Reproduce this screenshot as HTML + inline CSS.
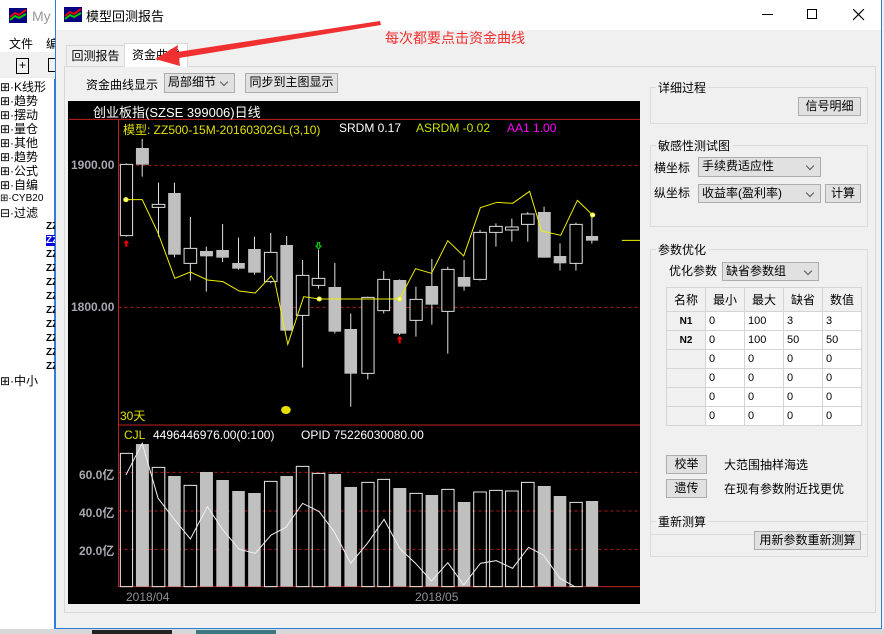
<!DOCTYPE html>
<html><head><meta charset="utf-8"><style>
*{margin:0;padding:0;box-sizing:border-box}
body{width:884px;height:634px;overflow:hidden;background:#f0f0f0;position:relative;font-family:"Liberation Sans","Noto Sans CJK SC",sans-serif;font-size:12px;color:#000}
.a{position:absolute;white-space:nowrap}
.btn{position:absolute;background:#e1e1e1;border:1px solid #adadad;text-align:center;font-size:12px;line-height:17px}
.cb{position:absolute;background:#e1e1e1;border:1px solid #adadad;font-size:12px;line-height:17px;padding-left:3px}
.cb:after{content:"";position:absolute;right:7px;top:5px;width:5px;height:5px;border-right:1px solid #555;border-bottom:1px solid #555;transform:rotate(45deg)}
.gb{position:absolute;border:1px solid #dcdcdc}
.gl{position:absolute;background:#f0f0f0;padding:0 2px;font-size:12px;line-height:14px}
.ct{position:absolute;font-size:12px;line-height:14px;white-space:nowrap}
table{border-collapse:collapse;position:absolute;left:666px;top:287px}
td{border:1px solid #d4d4d4;width:39px;height:19px;font-size:11px;padding-left:3px;background:#fff}
td.h{background:#f0f0f0;text-align:center;padding:0;font-size:12px}
.zz{padding-left:46px;font-size:10px;font-weight:bold;height:14px}
</style></head><body>
<div class="a" style="left:0;top:0;width:56px;height:634px;background:#fff"></div>
<svg class="a" style="left:9px;top:8px" width="18" height="15"><rect width="18" height="15" fill="#000080"/><path d="M1 9 L6 5 L10 7 L17 2" stroke="#e00" stroke-width="2" fill="none"/><path d="M1 12 L6 8 L10 10 L17 6" stroke="#0c0" stroke-width="2" fill="none"/></svg>
<div class="a" style="left:32px;top:8px;font-size:14px;color:#999">My</div>
<div class="a" style="left:0;top:31px;width:56px;height:20px;background:#fff"></div>
<div class="a" style="left:9px;top:35px;font-size:12px">文件</div>
<div class="a" style="left:46px;top:35px;font-size:12px">编</div>
<div class="a" style="left:0;top:52px;width:56px;height:26px;background:#f0f0f0"></div>
<div class="a" style="left:16px;top:58px;width:13px;height:16px;border:1px solid #000;font-size:12px;line-height:13px;text-align:center">+</div>
<div class="a" style="left:48px;top:58px;width:10px;height:14px;border:1px solid #000"></div>
<div class="a" style="left:0;top:79px;width:55px;height:551px;background:#fff;border-right:1px solid #3080e0"></div>
<div class="a" style="left:0;top:80px;font-size:12px;line-height:14px">
<div>⊞·K线形</div><div>⊞·趋势</div><div>⊞·摆动</div><div>⊞·量仓</div><div>⊞·其他</div><div>⊞·趋势</div><div>⊞·公式</div><div>⊞·自编</div><div style="font-size:10px">⊞·CYB20</div><div>⊟·过滤</div>
<div class="zz">ZZ</div><div class="zz"><span style="background:#0000e0;color:#fff">ZZ</span></div>
<div class="zz">ZZ</div><div class="zz">ZZ</div><div class="zz">ZZ</div><div class="zz">ZZ</div><div class="zz">ZZ</div><div class="zz">ZZ</div><div class="zz">ZZ</div><div class="zz">ZZ</div><div class="zz">ZZ</div>
<div>⊞·中小</div></div>
<div class="a" style="left:0;top:629px;width:884px;height:5px;background:#d8d8d8"></div>
<div class="a" style="left:92px;top:630px;width:80px;height:4px;background:#222"></div>
<div class="a" style="left:196px;top:630px;width:80px;height:4px;background:#3a7a80"></div>

<div class="a" style="left:55px;top:0;width:827px;height:629px;background:#f0f0f0;border:1px solid #2a7fd4;border-top:none"></div>
<div class="a" style="left:56px;top:0;width:825px;height:30px;background:#fff"></div>
<svg class="a" style="left:64px;top:7px" width="18" height="15"><rect width="18" height="15" fill="#000080"/><path d="M1 9 L6 5 L10 7 L17 2" stroke="#e00" stroke-width="2" fill="none"/><path d="M1 12 L6 8 L10 10 L17 6" stroke="#0c0" stroke-width="2" fill="none"/></svg>
<div class="a" style="left:86px;top:6px;font-size:13px">模型回测报告</div>
<div class="a" style="left:762px;top:14px;width:11px;height:1px;background:#000"></div>
<div class="a" style="left:807px;top:9px;width:10px;height:10px;border:1px solid #000"></div>
<svg class="a" style="left:853px;top:9px" width="12" height="12"><path d="M0 0L11 11M11 0L0 11" stroke="#000" stroke-width="1.2"/></svg>

<div class="a" style="left:64px;top:66px;width:812px;height:547px;border:1px solid #d9d9d9;background:#f0f0f0"></div>
<div class="a" style="left:66px;top:45px;width:59px;height:21px;border:1px solid #d9d9d9;border-bottom:none;background:#f0f0f0;font-size:12px;line-height:20px;text-align:center">回测报告</div>
<div class="a" style="left:124px;top:43px;width:64px;height:24px;border:1px solid #d9d9d9;border-bottom:none;background:#fff;font-size:12px;line-height:22px;text-align:center">资金曲线</div>

<div class="a" style="left:86px;top:76px;font-size:12px">资金曲线显示</div>
<div class="cb" style="left:164px;top:73px;width:71px;height:20px">局部细节</div>
<div class="btn" style="left:245px;top:73px;width:93px;height:20px">同步到主图显示</div>

<div class="a" style="left:68px;top:101px;width:572px;height:503px;background:#000"></div>
<svg class="a" style="left:60px;top:100px" width="580" height="534" viewBox="0 0 1566 1602" preserveAspectRatio="none">
<g fill="none">
<path d="M24 58H1566M158 58V1461M158 975H1566M158 1460H1566" stroke="#c02020" stroke-width="1" vector-effect="non-scaling-stroke"/>
<path d="M158 196H1566M158 622H1566M158 1117H1566M158 1233H1566M158 1348H1566" stroke="#b01818" stroke-width="1" stroke-dasharray="3 3" vector-effect="non-scaling-stroke"/>
</g>
<g stroke="#e0e0e0" stroke-width="1">
<path vector-effect="non-scaling-stroke" d="M179 190V410M222 117V230M266 248V410M309 248V472M352 351V542M395 440V575M439 372V486M482 413V509M525 410V524M569 399V550M612 408V692M655 480V803M698 450V566M742 489V700M785 641V920M831 590V838M874 513V640M917 538V705M961 560V710M1004 477V674M1047 500V761M1091 480V572M1134 390V542M1177 370V440M1220 356V425M1263 336V425M1307 320V473M1350 430V512M1393 368V512M1436 345V431"/>
</g>
<g stroke="#e0e0e0" fill="#000">
<rect x="163" y="193" width="33" height="214" vector-effect="non-scaling-stroke"/>
<rect x="249" y="313" width="34" height="9" vector-effect="non-scaling-stroke"/>
<rect x="335" y="445" width="34" height="45" vector-effect="non-scaling-stroke"/>
<rect x="552" y="457" width="34" height="88" vector-effect="non-scaling-stroke"/>
<rect x="638" y="526" width="34" height="120" vector-effect="non-scaling-stroke"/>
<rect x="681" y="535" width="34" height="21" vector-effect="non-scaling-stroke"/>
<rect x="815" y="592" width="33" height="228" vector-effect="non-scaling-stroke"/>
<rect x="858" y="538" width="32" height="94" vector-effect="non-scaling-stroke"/>
<rect x="945" y="598" width="33" height="63" vector-effect="non-scaling-stroke"/>
<rect x="1031" y="508" width="33" height="126" vector-effect="non-scaling-stroke"/>
<rect x="1117" y="397" width="34" height="141" vector-effect="non-scaling-stroke"/>
<rect x="1160" y="379" width="34" height="18" vector-effect="non-scaling-stroke"/>
<rect x="1203" y="381" width="34" height="9" vector-effect="non-scaling-stroke"/>
<rect x="1246" y="342" width="34" height="31" vector-effect="non-scaling-stroke"/>
<rect x="1377" y="373" width="33" height="117" vector-effect="non-scaling-stroke"/>
</g>
<g fill="#c0c0c0">
<rect x="205" y="144" width="35" height="50"/><rect x="292" y="279" width="34" height="185"/><rect x="378" y="453" width="35" height="16"/><rect x="422" y="450" width="34" height="23"/><rect x="465" y="489" width="34" height="17"/><rect x="508" y="447" width="34" height="71"/><rect x="595" y="435" width="34" height="257"/><rect x="725" y="561" width="34" height="134"/><rect x="768" y="687" width="34" height="134"/><rect x="900" y="540" width="35" height="161"/><rect x="987" y="558" width="34" height="56"/><rect x="1074" y="531" width="34" height="29"/><rect x="1290" y="336" width="35" height="137"/><rect x="1333" y="468" width="34" height="22"/><rect x="1420" y="408" width="33" height="14"/>
</g>
<polyline vector-effect="non-scaling-stroke" fill="none" stroke="#f0f000" stroke-width="1" points="178,299 222,299 265,400 310,535 352,516 398,540 440,545 484,573 527,579 570,528 580,545 615,733 658,590 700,597 917,597 960,506 1003,520 1047,422 1090,468 1135,323 1180,307 1222,310 1268,274 1300,393 1352,406 1397,301 1438,345"/>
<path vector-effect="non-scaling-stroke" d="M1517 421H1566" stroke="#f0f000"/>
<g fill="#ffffc0" stroke="#f0f000"><ellipse vector-effect="non-scaling-stroke" cx="178" cy="299" rx="6" ry="6"/><ellipse vector-effect="non-scaling-stroke" cx="700" cy="597" rx="6" ry="6"/><ellipse vector-effect="non-scaling-stroke" cx="917" cy="597" rx="6" ry="6"/><ellipse vector-effect="non-scaling-stroke" cx="1438" cy="345" rx="6" ry="6"/></g>
<ellipse cx="610" cy="930" rx="13" ry="12" fill="#e8e000"/>
<path d="M179 420L171 430H176V440H182V430H187Z M917 708L909 718H914V730H920V718H925Z" fill="#f00000"/>
<path vector-effect="non-scaling-stroke" d="M695 428V438H691L698 447L705 438H701V428Z" fill="none" stroke="#00e000"/>
<g fill="#c0c0c0">
<rect x="205" y="1032" width="35" height="428"/><rect x="292" y="1128" width="34" height="332"/><rect x="378" y="1116" width="35" height="344"/><rect x="422" y="1140" width="34" height="320"/><rect x="465" y="1173" width="34" height="287"/><rect x="508" y="1179" width="34" height="281"/><rect x="595" y="1128" width="34" height="332"/><rect x="725" y="1122" width="34" height="338"/><rect x="768" y="1161" width="34" height="299"/><rect x="900" y="1164" width="35" height="296"/><rect x="987" y="1185" width="34" height="275"/><rect x="1074" y="1206" width="34" height="254"/><rect x="1290" y="1158" width="35" height="302"/><rect x="1333" y="1188" width="34" height="272"/><rect x="1420" y="1203" width="33" height="257"/>
</g>
<g fill="none" stroke="#e8e8e8">
<rect vector-effect="non-scaling-stroke" x="163" y="1060" width="33" height="400"/><rect vector-effect="non-scaling-stroke" x="249" y="1102" width="34" height="358"/><rect vector-effect="non-scaling-stroke" x="335" y="1156" width="34" height="304"/><rect vector-effect="non-scaling-stroke" x="552" y="1144" width="34" height="316"/><rect vector-effect="non-scaling-stroke" x="638" y="1099" width="34" height="361"/><rect vector-effect="non-scaling-stroke" x="681" y="1120" width="34" height="340"/><rect vector-effect="non-scaling-stroke" x="815" y="1147" width="33" height="313"/><rect vector-effect="non-scaling-stroke" x="858" y="1138" width="32" height="322"/><rect vector-effect="non-scaling-stroke" x="945" y="1180" width="33" height="280"/><rect vector-effect="non-scaling-stroke" x="1031" y="1168" width="33" height="292"/><rect vector-effect="non-scaling-stroke" x="1117" y="1176" width="34" height="284"/><rect vector-effect="non-scaling-stroke" x="1160" y="1171" width="34" height="289"/><rect vector-effect="non-scaling-stroke" x="1203" y="1173" width="34" height="287"/><rect vector-effect="non-scaling-stroke" x="1246" y="1147" width="34" height="313"/><rect vector-effect="non-scaling-stroke" x="1377" y="1207" width="33" height="253"/>
</g>
<polyline vector-effect="non-scaling-stroke" fill="none" stroke="#f0f0f0" points="178,1125 222,1030 265,1195 310,1260 352,1317 398,1220 440,1290 484,1348 527,1360 570,1305 610,1282 655,1210 700,1235 740,1295 785,1390 830,1330 875,1258 917,1345 960,1390 1003,1443 1047,1388 1090,1455 1135,1390 1178,1382 1222,1405 1265,1342 1305,1365 1350,1435 1390,1460"/>
</svg>
<div class="a" style="left:93px;top:102px;color:#fff;font-size:13px">创业板指(SZSE 399006)日线</div>
<div class="a" style="left:123px;top:121px;font-size:12px;color:#e0e000">模型: ZZ500-15M-20160302GL(3,10)</div>
<div class="a" style="left:339px;top:121px;font-size:12px;color:#fff">SRDM 0.17</div>
<div class="a" style="left:416px;top:121px;font-size:12px;color:#c8e000">ASRDM -0.02</div>
<div class="a" style="left:507px;top:121px;font-size:12px;color:#ff00ff">AA1 1.00</div>
<div class="a" style="left:71px;top:158px;font-size:12px;color:#a8a8b0;font-weight:bold">1900.00</div>
<div class="a" style="left:71px;top:300px;font-size:12px;color:#a8a8b0;font-weight:bold">1800.00</div>
<div class="a" style="left:120px;top:407px;font-size:12px;color:#e0e000">30天</div>
<div class="a" style="left:124px;top:428px;font-size:12px;color:#e0e000">CJL</div>
<div class="a" style="left:153px;top:428px;font-size:12px;color:#fff">4496446976.00(0:100)</div>
<div class="a" style="left:301px;top:428px;font-size:12px;color:#fff">OPID 75226030080.00</div>
<div class="a" style="left:79px;top:466px;font-size:12px;color:#a8a8b0;font-weight:bold">60.0亿</div>
<div class="a" style="left:79px;top:504px;font-size:12px;color:#a8a8b0;font-weight:bold">40.0亿</div>
<div class="a" style="left:79px;top:542px;font-size:12px;color:#a8a8b0;font-weight:bold">20.0亿</div>
<div class="a" style="left:126px;top:590px;font-size:12px;color:#909098">2018/04</div>
<div class="a" style="left:415px;top:590px;font-size:12px;color:#909098">2018/05</div>

<div class="gb" style="left:650px;top:87px;width:218px;height:37px"></div><div class="gl" style="left:656px;top:81px">详细过程</div>
<div class="btn" style="left:798px;top:97px;width:63px;height:19px">信号明细</div>
<div class="gb" style="left:650px;top:145px;width:218px;height:82px"></div><div class="gl" style="left:656px;top:139px">敏感性测试图</div>
<div class="ct" style="left:654px;top:161px">横坐标</div><div class="cb" style="left:698px;top:157px;width:123px;height:20px">手续费适应性</div>
<div class="ct" style="left:654px;top:186px">纵坐标</div><div class="cb" style="left:698px;top:184px;width:123px;height:19px">收益率(盈利率)</div>
<div class="btn" style="left:825px;top:184px;width:36px;height:19px">计算</div>
<div class="gb" style="left:650px;top:249px;width:218px;height:286px"></div><div class="gl" style="left:656px;top:243px">参数优化</div>
<div class="ct" style="left:669px;top:264px">优化参数</div><div class="cb" style="left:722px;top:262px;width:97px;height:19px">缺省参数组</div>
<table>
<tr><td class="h" style="height:24px">名称</td><td class="h">最小</td><td class="h">最大</td><td class="h">缺省</td><td class="h">数值</td></tr>
<tr><td class="h" style="font-size:10px;font-weight:bold">N1</td><td>0</td><td>100</td><td>3</td><td>3</td></tr>
<tr><td class="h" style="font-size:10px;font-weight:bold">N2</td><td>0</td><td>100</td><td>50</td><td>50</td></tr>
<tr><td class="h"></td><td>0</td><td>0</td><td>0</td><td>0</td></tr>
<tr><td class="h"></td><td>0</td><td>0</td><td>0</td><td>0</td></tr>
<tr><td class="h"></td><td>0</td><td>0</td><td>0</td><td>0</td></tr>
<tr><td class="h"></td><td>0</td><td>0</td><td>0</td><td>0</td></tr>
</table>
<div class="btn" style="left:666px;top:455px;width:41px;height:19px">校举</div><div class="ct" style="left:724px;top:458px">大范围抽样海选</div>
<div class="btn" style="left:666px;top:479px;width:41px;height:19px">遗传</div><div class="ct" style="left:724px;top:482px">在现有参数附近找更优</div>
<div class="gb" style="left:650px;top:521px;width:218px;height:36px"></div><div class="gl" style="left:656px;top:515px">重新测算</div>
<div class="btn" style="left:754px;top:531px;width:107px;height:19px">用新参数重新测算</div>

<svg class="a" style="left:0;top:0" width="884" height="100"><path d="M155 59 L178 45 L177 52 L380 21 L381 25 L179 58 L180 66 Z" fill="#f03030"/></svg>
<div class="a" style="left:385px;top:28px;font-size:14px;color:#f03030">每次都要点击资金曲线</div>
</body></html>
